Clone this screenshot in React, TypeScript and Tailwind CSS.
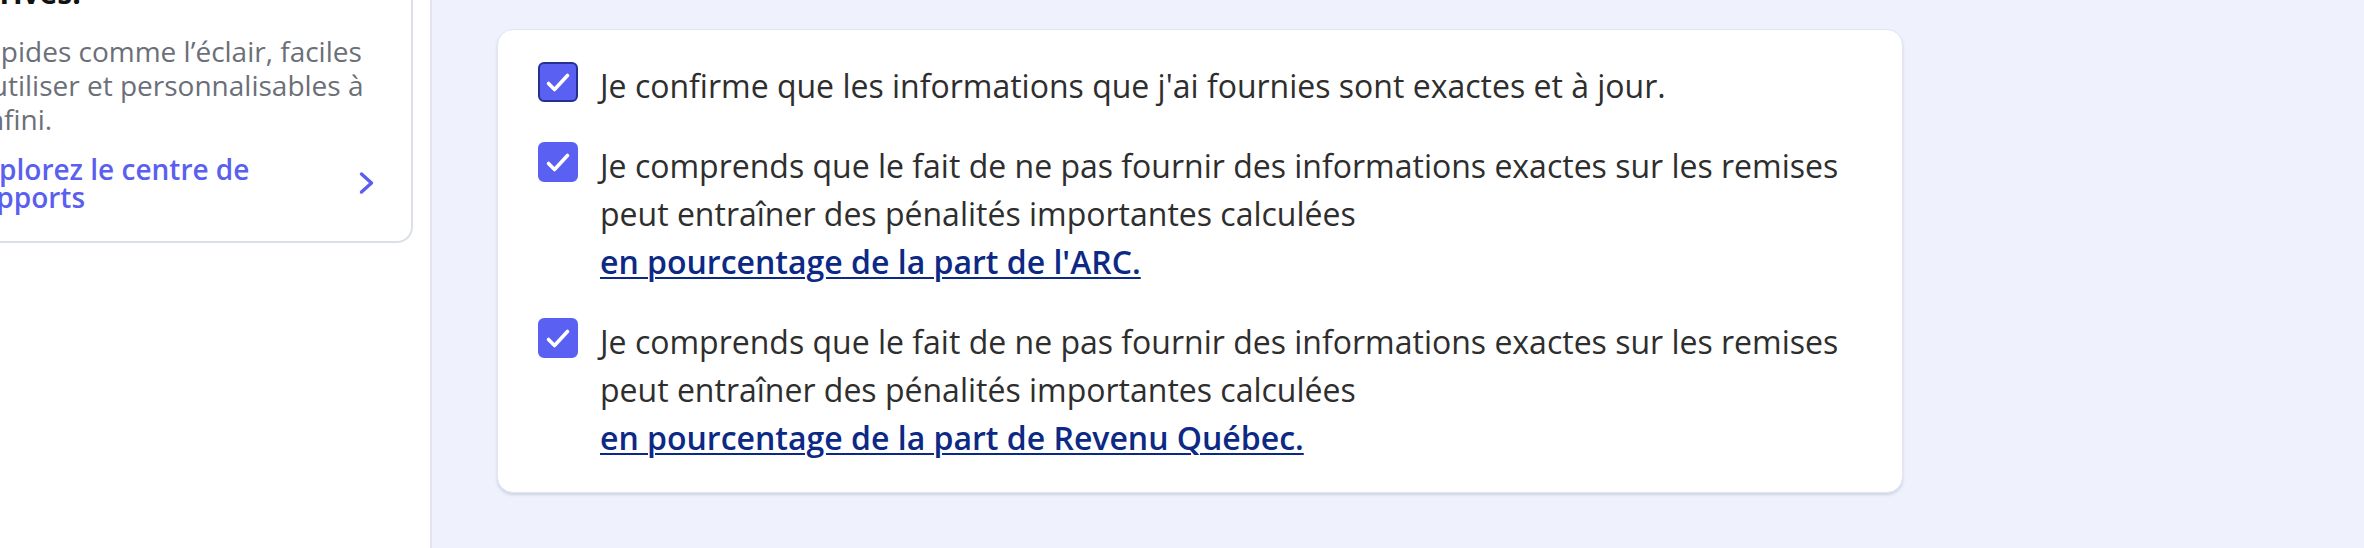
import React from "react";

function CheckBox({ focused }: { focused?: boolean }) {
  return (
    <span
      className={
        focused
          ? "flex h-[40px] w-[40px] shrink-0 items-center justify-center rounded-[6px] border-2 border-[#26308f] bg-[#5a61f2]"
          : "flex h-[40px] w-[40px] shrink-0 items-center justify-center rounded-[6px] border-2 border-[#5a61f2] bg-[#5a61f2]"
      }
    >
      <svg width="40" height="40" viewBox="0 0 40 40" fill="none" className="shrink-0">
        <polyline
          points="10.5,21.5 16.5,27.5 29.5,13.5"
          stroke="white"
          strokeWidth="3.6"
          strokeLinecap="round"
          strokeLinejoin="round"
        />
      </svg>
    </span>
  );
}

function Item({ focused, children }: { focused?: boolean; children: React.ReactNode }) {
  return (
    <div className="flex items-start gap-[22px]">
      <CheckBox focused={focused} />
      <p className="text-[32px] leading-[48px] text-[#2e2e2e]">{children}</p>
    </div>
  );
}

export default function App() {
  return (
    <div className="flex h-[548px] w-[2364px] overflow-hidden font-['Open_Sans',sans-serif]">
      <aside className="w-[432px] shrink-0 overflow-hidden border-r-2 border-[#e2e5ec] bg-white">
        <div className="-ml-[74px] -mt-[100px] mr-[17px] rounded-[16px] border-2 border-[#dadfe8] pb-[30px] pl-[40px] pr-[36px] pt-[37px]">
          <h2 className="whitespace-nowrap text-[30px] font-bold leading-[36px] text-[#111]">
            Vos rapports sont
            <br />
            arrivés:
          </h2>
          <p className="mt-[23px] whitespace-nowrap text-[28px] leading-[34px] text-[#6b6f78]">
            Rapides comme l’éclair, faciles
            <br />à utiliser et personnalisables à
            <br />
            l’infini.
          </p>
          <a href="#" className="mt-[19px] flex items-center justify-between text-[#5a5ff0]">
            <span className="whitespace-nowrap text-[28px] font-semibold leading-[28px]">
              Explorez le centre de
              <br />
              rapports
            </span>
            <svg width="16" height="24" viewBox="0 0 16 24" fill="none" className="shrink-0">
              <polyline
                points="2.5,3 12.5,12 2.5,21"
                stroke="#5a5ff0"
                strokeWidth="3.4"
                strokeLinecap="round"
                strokeLinejoin="round"
              />
            </svg>
          </a>
        </div>
      </aside>
      <main className="flex-1 bg-[#eff2fc] pl-[65px] pt-[29px]">
        <div className="flex w-[1406px] flex-col gap-[32px] rounded-[16px] border border-[#e3e6ef] bg-white px-[40px] pb-[30px] pt-[32px] shadow-[0_2px_3px_rgba(40,50,110,0.16)]">
          <Item focused>Je confirme que les informations que j'ai fournies sont exactes et à jour.</Item>
          <Item>
            Je comprends que le fait de ne pas fournir des informations exactes sur les remises
            <br />
            peut entraîner des pénalités importantes calculées
            <br />
            <a href="#" className="font-semibold text-[#0b2985] underline decoration-[2px] underline-offset-[3px]">
              en pourcentage de la part de l'ARC.
            </a>
          </Item>
          <Item>
            Je comprends que le fait de ne pas fournir des informations exactes sur les remises
            <br />
            peut entraîner des pénalités importantes calculées
            <br />
            <a href="#" className="font-semibold text-[#0b2985] underline decoration-[2px] underline-offset-[3px]">
              en pourcentage de la part de Revenu Québec.
            </a>
          </Item>
        </div>
      </main>
    </div>
  );
}
